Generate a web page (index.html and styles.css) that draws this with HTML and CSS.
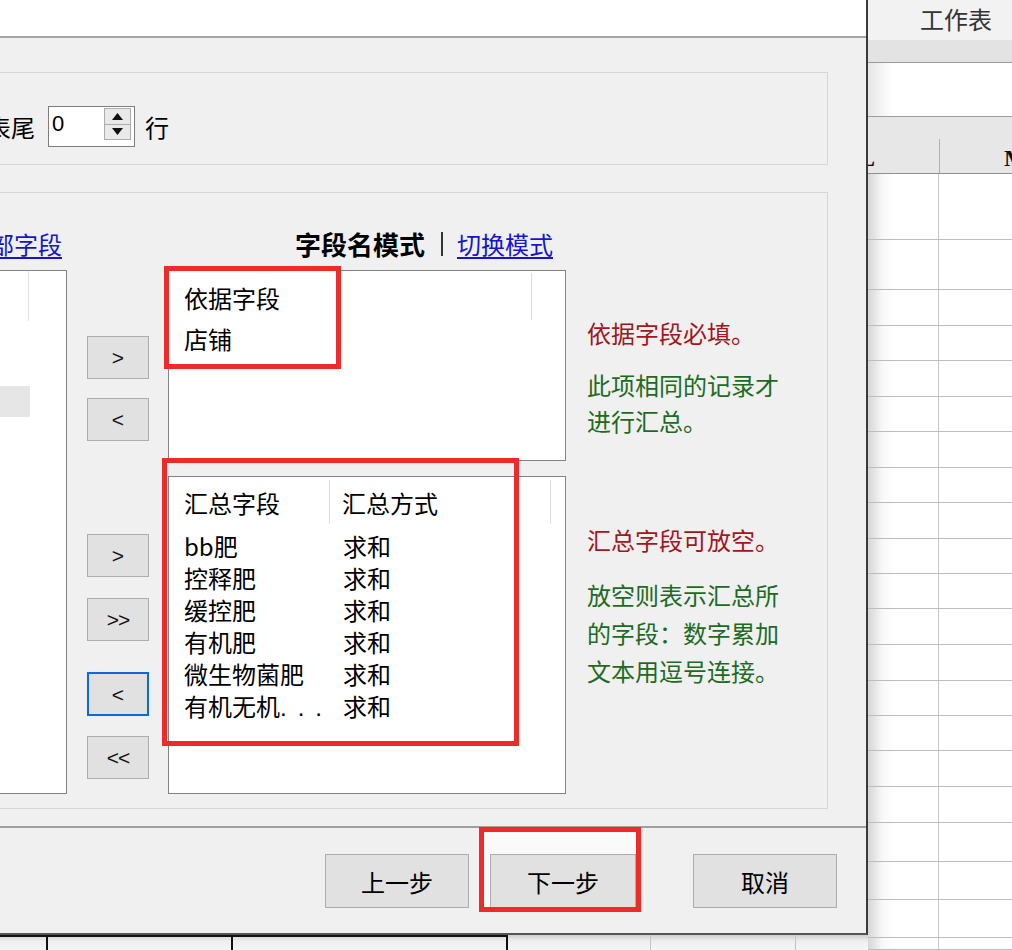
FILE: index.html
```html
<!DOCTYPE html>
<html lang="zh-CN">
<head>
<meta charset="utf-8">
<title>汇总向导</title>
<link rel="stylesheet" href="styles.css">
</head>
<body>
<div class="screen">
  <div class="left">
    <div class="dialog">
      <div class="titlebar"></div>
      <div class="dlg-body">
        <div class="group g1">
          <span class="lbl cut">表尾</span>
          <div class="spin">
            <span class="spin-val">0</span>
            <div class="spin-btns">
              <span class="spin-half"><svg width="11" height="7" viewBox="0 0 11 7"><path d="M0 7L5.5 0L11 7Z" fill="#111"/></svg></span>
              <span class="spin-half"><svg width="11" height="7" viewBox="0 0 11 7"><path d="M0 0L5.5 7L11 0Z" fill="#111"/></svg></span>
            </div>
          </div>
          <span class="lbl unit">行</span>
        </div>

        <div class="group g2">
          <div class="head-a"><a class="link">全部字段</a></div>
          <div></div>
          <div class="head-c"><b class="mode">字段名模式</b><span class="bar"></span><a class="link">切换模式</a></div>
          <div></div>

          <div class="list-a">
            <div class="la-head"></div>
            <div class="la-sel"></div>
          </div>

          <div class="btn-col">
            <button class="mv b1">&gt;</button>
            <button class="mv b2">&lt;</button>
            <button class="mv b3">&gt;</button>
            <button class="mv b4">&gt;&gt;</button>
            <button class="mv b5 focus">&lt;</button>
            <button class="mv b6">&lt;&lt;</button>
          </div>

          <div class="lists">
            <div class="lv upper">
              <div class="lv-head">
                <span class="hc hc-wide">依据字段</span><span class="div"></span>
              </div>
              <div class="lv-row u-row"><span class="c1">店铺</span></div>
            </div>
            <div class="lv lower">
              <div class="lv-head lh2">
                <span class="hc hc-a">汇总字段</span><span class="div d2"></span><span class="hc hc-b">汇总方式</span><span class="div d2"></span>
              </div>
              <div class="rows">
                <div class="lv-row"><span class="c1">bb肥</span><span class="c2">求和</span></div>
                <div class="lv-row"><span class="c1">控释肥</span><span class="c2">求和</span></div>
                <div class="lv-row"><span class="c1">缓控肥</span><span class="c2">求和</span></div>
                <div class="lv-row"><span class="c1">有机肥</span><span class="c2">求和</span></div>
                <div class="lv-row"><span class="c1">微生物菌肥</span><span class="c2">求和</span></div>
                <div class="lv-row"><span class="c1">有机无机<span class="dots">...</span></span><span class="c2">求和</span></div>
              </div>
            </div>
          </div>

          <div class="help">
            <p class="req">依据字段必填。</p>
            <p class="note n1">此项相同的记录才<br>进行汇总。</p>
            <p class="req r2">汇总字段可放空。</p>
            <p class="note n2">放空则表示汇总所<br>的字段：数字累加<br>文本用逗号连接。</p>
          </div>
        </div>
      </div>

      <div class="dlg-foot">
        <button class="fbtn prev">上一步</button>
        <span class="next-wrap"><button class="fbtn next">下一步</button></span>
        <button class="fbtn cancel">取消</button>
      </div>

      <div class="anno a1"></div>
      <div class="anno a2"></div>
      <div class="anno a3"></div>
    </div>
    <div class="under">
      <span class="uc u1"></span><span class="uc u2"></span><span class="uc u3"></span><span class="uc u4"></span><span class="uc u5"></span>
    </div>
  </div>

  <div class="sheet">
    <div class="tabbar">工作表</div>
    <div class="band"></div>
    <div class="fbar"></div>
    <div class="colhdr">
      <span class="ch ch1"><span class="letter l1">L</span></span>
      <span class="ch ch2"><span class="letter l2">M</span></span>
    </div>
    <div class="grid">
      <div class="row" style="height:66px"><span class="cell"></span></div>
      <div class="row" style="height:50px"><span class="cell"></span></div>
      <div class="row" style="height:36px"><span class="cell"></span></div>
      <div class="row" style="height:35px"><span class="cell"></span></div>
      <div class="row" style="height:36px"><span class="cell"></span></div>
      <div class="row" style="height:35px"><span class="cell"></span></div>
      <div class="row" style="height:36px"><span class="cell"></span></div>
      <div class="row" style="height:35px"><span class="cell"></span></div>
      <div class="row" style="height:36px"><span class="cell"></span></div>
      <div class="row" style="height:35px"><span class="cell"></span></div>
      <div class="row" style="height:35px"><span class="cell"></span></div>
      <div class="row" style="height:36px"><span class="cell"></span></div>
      <div class="row" style="height:36px"><span class="cell"></span></div>
      <div class="row" style="height:35px"><span class="cell"></span></div>
      <div class="row" style="height:35px"><span class="cell"></span></div>
      <div class="row" style="height:36px"><span class="cell"></span></div>
      <div class="row" style="height:36px"><span class="cell"></span></div>
      <div class="row" style="height:39px"><span class="cell"></span></div>
      <div class="row" style="height:38px"><span class="cell"></span></div>
      <div class="row" style="height:38px"><span class="cell"></span></div>
      <div class="row" style="height:12px"><span class="cell"></span></div>
    </div>
  </div>
</div>
</body>
</html>
```

FILE: styles.css
```css
* { box-sizing: border-box; }
html, body { margin: 0; padding: 0; }
body {
  font-family: "Noto Sans CJK SC", "Liberation Sans", sans-serif;
  font-size: 24px;
  color: #000;
  background: #fff;
}
p { margin: 0; }
button { font-family: inherit; margin: 0; padding: 0; cursor: default; }

.screen {
  width: 1012px;
  height: 950px;
  overflow: hidden;
  display: flex;
}

/* ---------- dialog column ---------- */
.left { width: 868px; flex: none; display: flex; flex-direction: column; }

.dialog {
  position: relative;
  width: 868px;
  height: 935px;
  background: #f0f0f0;
  border-right: 2px solid #3a3a3a;
  border-bottom: 2px solid #555;
  flex: none;
}

.titlebar {
  height: 38px;
  background: #fff;
  border-bottom: 2px solid #a4a4a4;
}

.dlg-body { padding-top: 34px; padding-bottom: 17px; }

.group {
  width: 828px;
  border: 1px solid #d6d6d6;
  border-left: none;
}

.g1 {
  height: 93px;
  padding-top: 33px;
  display: flex;
  align-items: center;
  align-content: flex-start;
  flex-wrap: wrap;
  margin-bottom: 27px;
}
.g1 > * { height: 41px; }
.lbl { line-height: 41px; white-space: nowrap; }
.cut { margin-left: -13px; }
.unit { margin-left: 10px; }

.spin {
  margin-left: 13px;
  width: 87px;
  background: #fff;
  border: 1px solid #7e7e7e;
  display: flex;
  justify-content: space-between;
}
.spin-val {
  font-family: "Liberation Sans", sans-serif;
  font-size: 22px;
  line-height: 34px;
  padding-left: 3px;
}
.spin-btns {
  width: 27px;
  margin: 1px 3px 6px 0;
  display: flex;
  flex-direction: column;
  border: 1px solid #adadad;
  background: #e9e9e9;
}
.spin-half {
  flex: 1;
  display: flex;
  align-items: center;
  justify-content: center;
}
.spin-half + .spin-half { border-top: 1px solid #adadad; }

.g2 {
  height: 617px;
  padding-top: 38px;
  display: grid;
  grid-template-columns: 87px 81px 419px 1fr;
  grid-template-rows: 26px 524px;
  row-gap: 13px;
}

.link {
  color: #1414d2;
  text-decoration: underline;
  text-underline-offset: 3px;
  white-space: nowrap;
}
.head-a {
  width: 62px;
  display: flex;
  justify-content: flex-end;
  line-height: 26px;
}
.head-c {
  width: 398px;
  padding-right: 13px;
  display: flex;
  justify-content: flex-end;
  align-items: center;
  line-height: 26px;
}
.mode { font-size: 26px; font-weight: 700; white-space: nowrap; }
.bar {
  width: 2px;
  height: 24px;
  background: #333;
  margin: 0 14px 0 16px;
}

.list-a {
  width: 67px;
  background: #fff;
  border: 1px solid #828282;
  border-left: none;
}
.la-head { width: 29px; height: 50px; border-right: 1px solid #e2e2e2; }
.la-sel { width: 30px; height: 31px; margin-top: 65px; background: #e6e6e6; }

.btn-col { display: flex; flex-direction: column; }
.mv {
  width: 62px;
  height: 43px;
  background: #e1e1e1;
  border: 1px solid #adadad;
  font-family: "Liberation Sans", sans-serif;
  font-size: 21px;
  color: #111;
  line-height: 1;
}
.b1 { margin-top: 66px; }
.b2 { margin-top: 19px; }
.b3 { margin-top: 93px; }
.b4 { margin-top: 21px; letter-spacing: -1px; }
.b5 { margin-top: 31px; height: 44px; }
.b6 { margin-top: 20px; letter-spacing: -1px; }
.focus { border: 2px solid #1068d8; }

.lists { width: 398px; display: flex; flex-direction: column; }
.lv { background: #fff; border: 1px solid #838383; }
.upper { height: 191px; margin-bottom: 15px; }
.lower { height: 318px; }

.lv-head { display: flex; height: 52px; }
.lh2 { height: 53px; }
.hc { line-height: 27px; white-space: nowrap; }
.hc-wide { width: 362px; padding: 13px 0 0 15px; }
.hc-a { width: 160px; padding: 12px 0 0 15px; }
.hc-b { width: 220px; padding: 12px 0 0 12px; }
.div { width: 1px; height: 47px; margin-top: 2px; background: #dcdcdc; }
.d2 { height: 44px; margin-top: 3px; }

.lv-row { display: flex; line-height: 27px; white-space: nowrap; }
.u-row { margin-top: 2px; }
.u-row .c1 { padding-left: 15px; }
.rows .lv-row { line-height: 32px; }
.rows .c1 { width: 161px; padding-left: 15px; }
.rows .c2 { padding-left: 13px; }
.dots { letter-spacing: 11px; font-family: "Liberation Sans", sans-serif; }

.help { padding-top: 45px; white-space: nowrap; }
.req { color: #a3161c; line-height: 36px; }
.note { color: #1c6b1f; }
.n1 { margin-top: 16px; line-height: 36px; }
.r2 { margin-top: 83px; }
.n2 { margin-top: 18px; line-height: 38px; }

.dlg-foot {
  height: 107px;
  border-top: 2px solid #a0a0a0;
  padding: 3px 0 0 325px;
  display: flex;
  align-items: flex-start;
}
.fbtn {
  width: 144px;
  height: 54px;
  background: #e1e1e1;
  border: 1px solid #adadad;
  font-size: 24px;
  color: #000;
  flex: none;
}
.prev { margin-top: 23px; }
.next-wrap {
  margin-left: 14px;
  padding: 23px 1px 0 7px;
  background: #fafafa;
  display: flex;
}
.next { width: 146px; }
.cancel { margin-left: 56px; margin-top: 23px; }

.anno { position: absolute; border: 5px solid #ee2b2b; }
.a1 { left: 164px; top: 266px; width: 177px; height: 103px; }
.a2 { left: 162px; top: 458px; width: 357px; height: 288px; }
.a3 { left: 479px; top: 827px; width: 162px; height: 85px; }

.under {
  height: 15px;
  display: flex;
  background: linear-gradient(#cfcfcf, #eeeeee 6px, #f6f6f6);
}
.uc { height: 15px; flex: none; }
.u1 { width: 48px; border-top: 2px solid #111; border-right: 2px solid #111; }
.u2 { width: 185px; border-top: 2px solid #111; border-right: 2px solid #111; }
.u3 { width: 275px; border-top: 2px solid #111; border-right: 2px solid #111; }
.u4 { width: 143px; border-right: 1px solid #c4c4c4; }
.u5 { width: 145px; border-right: 1px solid #c4c4c4; }

/* ---------- spreadsheet column ---------- */
.sheet { width: 144px; flex: none; display: flex; flex-direction: column; background: #fff; }
.tabbar {
  height: 40px;
  background: #f2f2f2;
  color: #333;
  line-height: 38px;
  padding-left: 52px;
  white-space: nowrap;
}
.band { height: 23px; background: #e3e3e3; border-bottom: 1px solid #9a9a9a; }
.fbar {
  height: 55px;
  background: linear-gradient(to right, #e6e6e6, #fff 24px);
  border-bottom: 1px solid #9c9c9c;
}
.colhdr {
  height: 57px;
  background: #e7e7e7;
  border-bottom: 1px solid #8f8f8f;
  display: flex;
  overflow: hidden;
}
.ch { height: 56px; flex: none; display: flex; align-items: flex-end; }
.ch1 { width: 71px; border-right: 1px solid transparent; }
.ch2 { width: 73px; border-left: 1px solid #b0b0b0; margin-top: 22px; height: 34px; padding-left: 64px; }
.letter {
  font-family: "Liberation Serif", serif;
  font-weight: 700;
  font-size: 24px;
  line-height: 30px;
  color: #111;
}
.l1 { margin-left: -9px; }

.grid { display: flex; flex-direction: column; }
.row { border-bottom: 1px solid #bdbdbd; display: flex; flex: none; }
.cell {
  width: 71px;
  border-right: 1px solid #c6c6c6;
  background: linear-gradient(to right, #d6d6d6, #f7f7f7 14px, #fff 26px);
}
```
